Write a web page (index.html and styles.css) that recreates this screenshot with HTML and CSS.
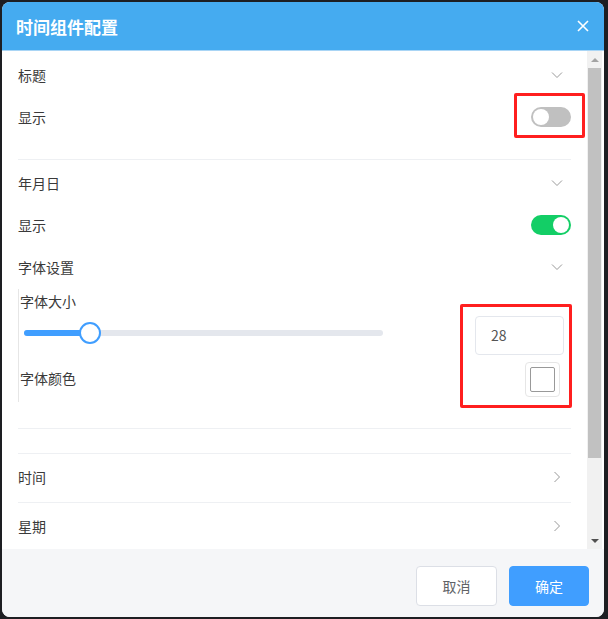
FILE: index.html
```html
<!DOCTYPE html>
<html lang="zh-CN">
<head>
    <meta charset="UTF-8">
    <meta name="viewport" content="width=device-width, initial-scale=1.0">
    <title>时间组件配置</title>
    <link rel="stylesheet" href="styles.css">
</head>
<body>
    <div class="dialog">
        <div class="dialog-header">
            <span class="dialog-title">时间组件配置</span>
            <svg class="close" width="12" height="12" viewBox="0 0 12 12">
                <path d="M1 1L11 11M11 1L1 11" stroke="#fff" stroke-width="1.6" fill="none"/>
            </svg>
        </div>

        <div class="dialog-main">
            <div class="dialog-body">
                <div class="row">
                    <span>标题</span>
                    <svg class="chev" width="12" height="8" viewBox="0 0 12 8"><path d="M1 1.5L6 6.5L11 1.5" stroke="#999" fill="none"/></svg>
                </div>
                <div class="row">
                    <span>显示</span>
                    <div class="switch"><span class="knob"></span></div>
                </div>

                <div class="divider first"></div>

                <div class="row">
                    <span>年月日</span>
                    <svg class="chev" width="12" height="8" viewBox="0 0 12 8"><path d="M1 1.5L6 6.5L11 1.5" stroke="#999" fill="none"/></svg>
                </div>
                <div class="row">
                    <span>显示</span>
                    <div class="switch on"><span class="knob"></span></div>
                </div>
                <div class="row short">
                    <span>字体设置</span>
                    <svg class="chev" width="12" height="8" viewBox="0 0 12 8"><path d="M1 1.5L6 6.5L11 1.5" stroke="#999" fill="none"/></svg>
                </div>

                <div class="font-panel">
                    <div class="field-label">字体大小</div>
                    <div class="size-row">
                        <div class="slider">
                            <div class="slider-fill" style="width: 65px"></div>
                            <div class="slider-thumb" style="left: 65px"></div>
                        </div>
                        <div class="num-input">28</div>
                    </div>
                    <div class="color-row">
                        <span class="field-label color-label">字体颜色</span>
                        <div class="color-picker"><span class="swatch"></span></div>
                    </div>
                </div>

                <div class="divider second"></div>
                <div class="divider"></div>

                <div class="row tall">
                    <span>时间</span>
                    <svg class="chev-r" width="8" height="12" viewBox="0 0 8 12"><path d="M1.5 1L6.5 6L1.5 11" stroke="#999" fill="none"/></svg>
                </div>
                <div class="divider"></div>
                <div class="row tall">
                    <span>星期</span>
                    <svg class="chev-r" width="8" height="12" viewBox="0 0 8 12"><path d="M1.5 1L6.5 6L1.5 11" stroke="#999" fill="none"/></svg>
                </div>
            </div>

            <div class="scrollbar">
                <div class="sb-arrow"><span class="tri-up"></span></div>
                <div class="sb-track"><div class="sb-thumb"></div></div>
                <div class="sb-arrow"><span class="tri-down"></span></div>
            </div>
        </div>

        <div class="dialog-footer">
            <button class="btn">取消</button>
            <button class="btn primary">确定</button>
        </div>

        <!-- annotation boxes -->
        <div class="mark mark-switch"></div>
        <div class="mark mark-font"></div>
    </div>
</body>
</html>
```

FILE: styles.css
```css
body {
    margin: 0;
    background-color: #1d1e22;
    font-family: "Noto Sans CJK SC", "Noto Sans", sans-serif;
    font-size: 14px;
    color: #3a3a3a;
}
.dialog {
    position: relative;
    margin: 2px;
    width: 602px;
    height: 615px;
    border-radius: 8px;
    overflow: hidden;
    background-color: #fff;
    display: flex;
    flex-direction: column;
}
.dialog-header {
    height: 48px;
    flex-shrink: 0;
    background-color: #45abf0;
    border-bottom: 1px solid #a9d5f5;
    display: flex;
    align-items: center;
    justify-content: space-between;
    padding: 0 15px 0 14px;
}
.dialog-title {
    color: #fff;
    font-size: 17px;
    font-weight: bold;
}
.dialog-main {
    height: 498px;
    flex-shrink: 0;
    display: flex;
    overflow: hidden;
}
.dialog-body {
    flex: 1;
    padding: 3px 16px 0 16px;
    overflow: hidden;
}
.row {
    height: 42px;
    display: flex;
    align-items: center;
    justify-content: space-between;
}
.row.short {
    height: 41px;
}
.row.tall {
    height: 46px;
    padding-bottom: 2px;
}
.chev {
    margin-right: 8px;
}
.chev-r {
    margin-right: 10px;
}
.switch {
    width: 40px;
    height: 20px;
    border-radius: 10px;
    background-color: #c0c0c0;
    position: relative;
}
.switch .knob {
    position: absolute;
    top: 2px;
    left: 2px;
    width: 16px;
    height: 16px;
    border-radius: 50%;
    background-color: #fff;
}
.switch.on {
    background-color: #13ce66;
}
.switch.on .knob {
    left: 22px;
}
.divider {
    height: 1px;
    background-color: #eef0f3;
}
.divider.first {
    margin: 21px 0 2px;
}
.divider.second {
    margin-top: 26px;
    margin-bottom: 24px;
}
.font-panel {
    margin-top: 2px;
    border-left: 1px solid #e6e6e6;
    padding: 2px 7px 0 1px;
    height: 111px;
}
.field-label {
    line-height: 20px;
}
.color-label {
    padding-bottom: 4px;
}
.size-row {
    display: flex;
    align-items: center;
    justify-content: space-between;
    margin-top: 5px;
}
.slider {
    position: relative;
    width: 359px;
    height: 6px;
    margin: 0 0 0 4px;
    top: -3px;
    border-radius: 3px;
    background-color: #e4e7ed;
}
.slider-fill {
    height: 6px;
    border-radius: 3px;
    background-color: #409eff;
}
.slider-thumb {
    position: absolute;
    top: -8px;
    width: 18px;
    height: 18px;
    margin-left: -10px;
    border: 2px solid #409eff;
    border-radius: 50%;
    background-color: #fff;
}
.num-input {
    width: 72px;
    height: 37px;
    border: 1px solid #e4e7ed;
    border-radius: 4px;
    padding-left: 15px;
    line-height: 37px;
    color: #555;
}
.color-row {
    display: flex;
    align-items: center;
    justify-content: space-between;
    margin-top: 7px;
    padding-right: 4px;
}
.color-picker {
    width: 33px;
    height: 33px;
    border: 1px solid #e6e6e6;
    border-radius: 4px;
    display: flex;
    align-items: center;
    justify-content: center;
}
.swatch {
    width: 23px;
    height: 23px;
    border: 1px solid #999;
    border-radius: 2px;
    background-color: #fff;
}
.scrollbar {
    width: 15px;
    margin-right: 2px;
    background-color: #f1f1f1;
    display: flex;
    flex-direction: column;
}
.sb-arrow {
    height: 17px;
    display: flex;
    align-items: center;
    justify-content: center;
}
.tri-up {
    border-left: 4px solid transparent;
    border-right: 4px solid transparent;
    border-bottom: 4px solid #a3a3a3;
}
.tri-down {
    border-left: 4px solid transparent;
    border-right: 4px solid transparent;
    border-top: 4px solid #505050;
}
.sb-track {
    flex: 1;
    padding: 0 1px;
}
.sb-thumb {
    height: 390px;
    background-color: #c1c1c1;
}
.dialog-footer {
    flex: 1;
    background-color: #f5f6f8;
    display: flex;
    justify-content: flex-end;
    align-items: flex-start;
    gap: 12px;
    padding: 17px 15px 0 0;
}
.btn {
    width: 81px;
    height: 40px;
    border: 1px solid #dcdfe6;
    border-radius: 4px;
    background-color: #fff;
    color: #606266;
    font-family: inherit;
    font-size: 14px;
}
.btn.primary {
    width: 80px;
    background-color: #409eff;
    border-color: #409eff;
    color: #fff;
}
.mark {
    position: absolute;
    border: 3px solid #ff1f1f;
    border-radius: 2px;
}
.mark-switch {
    left: 512px;
    top: 91px;
    width: 65px;
    height: 39px;
}
.mark-font {
    left: 458px;
    top: 302px;
    width: 106px;
    height: 98px;
}
```
